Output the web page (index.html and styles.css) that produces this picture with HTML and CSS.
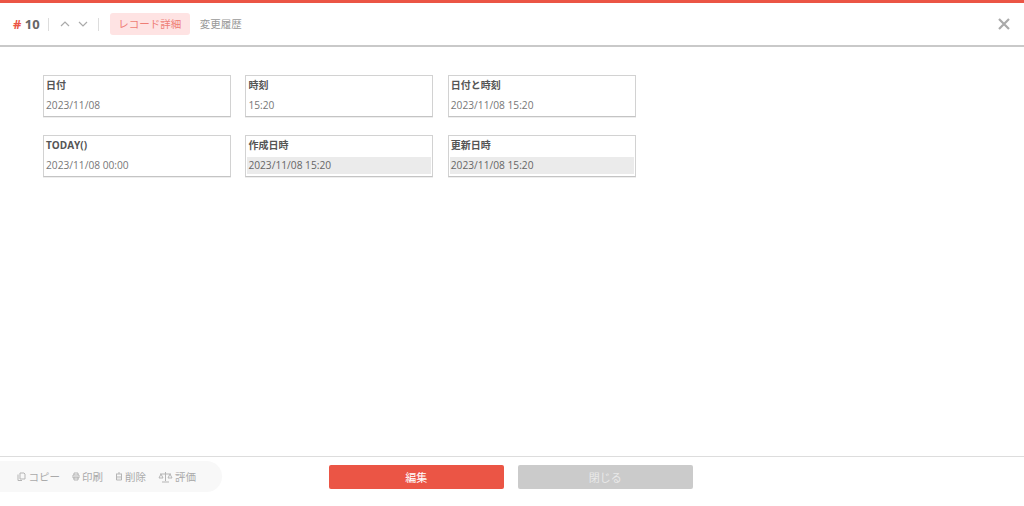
FILE: index.html
```html
<!DOCTYPE html>
<html lang="ja">
<head>
<meta charset="utf-8">
<title>レコード詳細</title>
<link rel="stylesheet" href="styles.css">
</head>
<body>
<div class="app">
  <header class="head">
    <div class="id"><span class="hash">#</span> 10</div>
    <span class="sep"></span>
    <svg class="chev" width="10" height="6" viewBox="0 0 10 6"><path d="M1 5l4-4 4 4"/></svg>
    <svg class="chev" width="10" height="6" viewBox="0 0 10 6"><path d="M1 1l4 4 4-4"/></svg>
    <span class="sep"></span>
    <span class="tab active">レコード詳細</span>
    <span class="tab">変更履歴</span>
    <svg class="close" width="12" height="12" viewBox="0 0 12 12"><path d="M1 1l10 10M11 1L1 11"/></svg>
  </header>
  <main class="main">
    <div class="grid">
      <div class="card"><div class="label">日付</div><div class="value">2023/11/08</div></div>
      <div class="card"><div class="label">時刻</div><div class="value">15:20</div></div>
      <div class="card"><div class="label">日付と時刻</div><div class="value">2023/11/08 15:20</div></div>
      <div class="card"><div class="label">TODAY()</div><div class="value">2023/11/08 00:00</div></div>
      <div class="card"><div class="label">作成日時</div><div class="value auto">2023/11/08 15:20</div></div>
      <div class="card"><div class="label">更新日時</div><div class="value auto">2023/11/08 15:20</div></div>
    </div>
  </main>
  <footer class="foot">
    <div class="tools">
      <span class="tool"><svg width="9" height="10" viewBox="0 0 9 10"><path d="M1 2.500v6h4M3 1h4l1 1v5H3z"/></svg>コピー</span>
      <span class="tool"><svg width="8" height="9" viewBox="0 0 8 9"><path d="M2 3V1h4v2M1 3h6v3H1zM2 5h4v3H2z"/></svg>印刷</span>
      <span class="tool"><svg width="8" height="9" viewBox="0 0 8 9"><path d="M1 2h6M3 1h2M1.500 2v6h5V2M3 4v2.500M5 4v2.500"/></svg>削除</span>
      <span class="tool"><svg width="15" height="12" viewBox="0 0 15 12"><path d="M7.500 1v9M4 11h7M2 3h11M3 3L1 7h4zM12 3l-2 4h4z"/></svg>評価</span>
    </div>
    <div class="actions">
      <button class="btn primary">編集</button>
      <button class="btn muted">閉じる</button>
    </div>
  </footer>
</div>
</body>
</html>
```
FILE: styles.css
```css
* { box-sizing: border-box; }
html, body { margin: 0; height: 100%; }
body {
  background: #fff;
  font-family: "Open Sans", "Noto Sans CJK JP", sans-serif;
  color: #666;
}
.app {
  height: 506px;
  display: flex;
  flex-direction: column;
  border-top: 3px solid #eb5545;
}
.head {
  height: 44px;
  flex: none;
  display: flex;
  align-items: center;
  padding-left: 13px;
  border-bottom: 2px solid #c9c9c9;
}
.id { font-size: 13px; font-weight: 700; color: #666; line-height: 1; }
.hash { color: #eb5545; }
.sep { width: 1px; height: 13px; background: #ddd; margin-left: 8px; }
.chev { margin-left: 11px; flex: none; fill: none; stroke: #aaa; stroke-width: 1.200; }
.chev + .chev { margin-left: 8px; }
.chev + .sep { margin-left: 10px; }
.tab { font-size: 10.500px; line-height: 23px; height: 22px; padding: 0 8px; color: #999; border-radius: 3px; }
.tab.active { margin-left: 11px; margin-right: 2px; padding: 0 8.500px; background: #fee3e3; color: #ee7d75; }
.close { margin-left: auto; margin-right: 14px; flex: none; fill: none; stroke: #aaa; stroke-width: 2.200; }
.main { flex: 1; padding: 28px 0 0 43px; }
.grid {
  display: grid;
  grid-template-columns: repeat(3, 188px);
  column-gap: 14.400px;
  row-gap: 18.500px;
  width: 593px;
}
.card {
  height: 41.500px;
  border: 1px solid #d2d2d2;
  border-bottom-color: #c4c4c4;
  padding: 1px 1px 0;
  display: flex;
  flex-direction: column;
  box-shadow: 0 1px 0 #eee;
}
.label { height: 19.500px; line-height: 17px; padding-left: 1px; font-size: 10px; font-weight: 700; color: #555; }
.value { height: 17px; line-height: 17px; padding-left: 1px; font-size: 10.200px; color: #777; }
.value.auto { background: #ebebeb; color: #666; }
.foot {
  flex: none;
  height: 50px;
  border-top: 1px solid #ddd;
  position: relative;
  display: flex;
  justify-content: center;
}
.tools {
  position: absolute;
  left: 0;
  top: 4px;
  width: 222px;
  height: 31px;
  padding-left: 17px;
  background: #f8f8f8;
  border-radius: 0 16px 16px 0;
  display: flex;
  align-items: center;
  gap: 11.500px;
}
.tool { display: flex; align-items: center; gap: 2.500px; font-size: 10.500px; color: #aaa; }
.tool svg { flex: none; fill: none; stroke: #b5b5b5; stroke-width: 1; }
.actions { display: flex; gap: 14.500px; margin: 8px 0 0 -2.500px; }
.btn {
  width: 174.500px;
  height: 24px;
  border: 0;
  border-radius: 2px;
  font: 11px "Open Sans", "Noto Sans CJK JP", sans-serif;
  color: #fff;
  padding: 0;
}
.primary { background: #eb5545; }
.muted { background: #cbcbcb; color: #e9e9e9; }
```
